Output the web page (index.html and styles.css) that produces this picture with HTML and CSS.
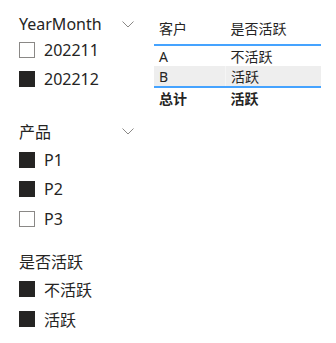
FILE: index.html
```html
<!DOCTYPE html>
<html lang="zh">
<head>
<meta charset="utf-8"/>
<meta name="viewport" content="width=device-width,initial-scale=1"/>
<title>客户活跃</title>
<link rel="stylesheet" href="styles.css">
</head>
<body>
<div class="page">
  <div class="slicers">
    <div class="slicer s-month">
      <div class="head">
        <span class="title">YearMonth</span>
        <svg class="chev" width="12" height="7" viewBox="0 0 12 7"><polyline points="0.5,0.5 6,6 11.5,0.5" fill="none" stroke="#8a8886" stroke-width="1"/></svg>
      </div>
      <div class="item"><span class="box"></span>202211</div>
      <div class="item"><span class="box on"></span>202212</div>
    </div>

    <div class="slicer s-prod">
      <div class="head">
        <span class="title">产品</span>
        <svg class="chev" width="12" height="7" viewBox="0 0 12 7"><polyline points="0.5,0.5 6,6 11.5,0.5" fill="none" stroke="#8a8886" stroke-width="1"/></svg>
      </div>
      <div class="item"><span class="box on"></span>P1</div>
      <div class="item"><span class="box on"></span>P2</div>
      <div class="item"><span class="box"></span>P3</div>
    </div>

    <div class="slicer s-active">
      <div class="head">
        <span class="title">是否活跃</span>
      </div>
      <div class="item"><span class="box on"></span>不活跃</div>
      <div class="item"><span class="box on"></span>活跃</div>
    </div>
  </div>

  <div class="tablewrap">
    <table>
      <thead><tr><th class="c1">客户</th><th>是否活跃</th></tr></thead>
      <tbody>
        <tr><td class="c1">A</td><td>不活跃</td></tr>
        <tr class="alt"><td class="c1">B</td><td>活跃</td></tr>
      </tbody>
      <tfoot><tr><td class="c1">总计</td><td>活跃</td></tr></tfoot>
    </table>
  </div>
</div>
</body>
</html>
```

FILE: styles.css
```css
body{margin:0;background:#fff;color:#252423;font-family:"Segoe UI","Noto Sans","Noto Sans CJK SC",sans-serif}
.page{display:flex;width:336px;height:343px}
.slicers{width:135px;padding-left:19px;box-sizing:border-box}
.slicer .head{display:flex;justify-content:space-between;align-items:center;height:22px;font-size:16px}
.chev{margin-right:1px}
.s-month{margin-top:13px}
.s-prod{margin-top:26px}
.s-active{margin-top:16px}
.s-prod .head,.s-active .head{margin-bottom:3px}
.item{display:flex;align-items:center;gap:9px;height:29.5px;font-size:16px}
.box{width:14px;height:14px;border:1px solid #8a8886;background:#fff;flex:none}
.box.on{background:#252423;border-color:#252423}
.tablewrap{margin-left:19px;margin-top:12px;width:167px}
table{width:100%;border-collapse:collapse;font-size:14px}
th,td{text-align:left;font-weight:normal;padding:0 5px;height:20px}
th{height:32px;border-bottom:2px solid #45a3ff}
.c1{width:61px}
tr.alt td{background:#eeeeee}
tr.alt td.c1{border-right:1px solid #f5f5f5}
tfoot td{font-weight:bold;border-top:2px solid #45a3ff}
```
